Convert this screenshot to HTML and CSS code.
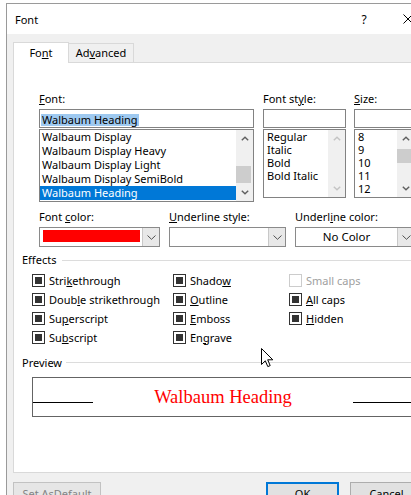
FILE: index.html
```html
<!DOCTYPE html>
<html>
<head>
<meta charset="utf-8">
<link rel="stylesheet" href="styles.css">
</head>
<body>
<div class="window">
  <div class="titlebar">
    <span class="title">Font</span>
    <span class="help">?</span>
    <span></span>
    <svg class="close" width="10" height="10" viewBox="0 0 10 10"><path d="M0.5 0.5L9.5 9.5M9.5 0.5L0.5 9.5" stroke="#000" stroke-width="1"/></svg>
  </div>
  <div class="body">
    <div class="tabs">
      <div class="tab active">Fo<u>n</u>t</div>
      <div class="tab adv">Ad<u>v</u>anced</div>
    </div>
    <div class="panel">
      <div class="pickers">
        <div class="col col-font">
          <div class="lbl"><u>F</u>ont:</div>
          <div class="input"><span class="sel">Walbaum Heading</span></div>
          <div class="list list-font">
            <div class="items">
              <div class="item">Walbaum Display</div>
              <div class="item">Walbaum Display Heavy</div>
              <div class="item">Walbaum Display Light</div>
              <div class="item">Walbaum Display SemiBold</div>
              <div class="item on">Walbaum Heading</div>
            </div>
            <div class="sb">
              <div class="sbtn"><svg width="8" height="5" viewBox="0 0 8 5"><polyline points="0.8,4.3 4,1.2 7.2,4.3" fill="none" stroke="#606060" stroke-width="1.4"/></svg></div>
              <div class="track"><div class="thumb thumb-font"></div></div>
              <div class="sbtn"><svg width="8" height="5" viewBox="0 0 8 5"><polyline points="0.8,0.7 4,3.8 7.2,0.7" fill="none" stroke="#606060" stroke-width="1.4"/></svg></div>
            </div>
          </div>
        </div>
        <div class="col col-style">
          <div class="lbl">Font st<u>y</u>le:</div>
          <div class="input"></div>
          <div class="list list-small">
            <div class="items">
              <div class="item">Regular</div>
              <div class="item">Italic</div>
              <div class="item">Bold</div>
              <div class="item">Bold Italic</div>
            </div>
            <div class="sb">
              <div class="sbtn"><svg width="8" height="5" viewBox="0 0 8 5"><polyline points="0.8,4.3 4,1.2 7.2,4.3" fill="none" stroke="#c4c4c4" stroke-width="1.4"/></svg></div>
              <div class="track"></div>
              <div class="sbtn"><svg width="8" height="5" viewBox="0 0 8 5"><polyline points="0.8,0.7 4,3.8 7.2,0.7" fill="none" stroke="#c4c4c4" stroke-width="1.4"/></svg></div>
            </div>
          </div>
        </div>
        <div class="col col-size">
          <div class="lbl"><u>S</u>ize:</div>
          <div class="input"></div>
          <div class="list list-small">
            <div class="items">
              <div class="item">8</div>
              <div class="item">9</div>
              <div class="item">10</div>
              <div class="item">11</div>
              <div class="item">12</div>
            </div>
            <div class="sb">
              <div class="sbtn"><svg width="8" height="5" viewBox="0 0 8 5"><polyline points="0.8,4.3 4,1.2 7.2,4.3" fill="none" stroke="#606060" stroke-width="1.4"/></svg></div>
              <div class="track"><div class="thumb thumb-size"></div></div>
              <div class="sbtn"><svg width="8" height="5" viewBox="0 0 8 5"><polyline points="0.8,0.7 4,3.8 7.2,0.7" fill="none" stroke="#606060" stroke-width="1.4"/></svg></div>
            </div>
          </div>
        </div>
      </div>

      <div class="combos">
        <div class="ccol c1">
          <div class="lbl">Font <u>c</u>olor:</div>
          <div class="combo">
            <div class="val"><span class="swatch"></span></div>
            <div class="dd"><svg width="9" height="5" viewBox="0 0 9 5"><polyline points="0.5,0.5 4.5,4.3 8.5,0.5" fill="none" stroke="#505050" stroke-width="1"/></svg></div>
          </div>
        </div>
        <div class="ccol c2">
          <div class="lbl"><u>U</u>nderline style:</div>
          <div class="combo">
            <div class="val"></div>
            <div class="dd"><svg width="9" height="5" viewBox="0 0 9 5"><polyline points="0.5,0.5 4.5,4.3 8.5,0.5" fill="none" stroke="#505050" stroke-width="1"/></svg></div>
          </div>
        </div>
        <div class="ccol c3">
          <div class="lbl">Underl<u>i</u>ne color:</div>
          <div class="combo">
            <div class="val center">No Color</div>
            <div class="dd"><svg width="9" height="5" viewBox="0 0 9 5"><polyline points="0.5,0.5 4.5,4.3 8.5,0.5" fill="none" stroke="#505050" stroke-width="1"/></svg></div>
          </div>
        </div>
      </div>

      <div class="group-head effects-head"><span class="gl">Effects</span><span class="rule"></span></div>
      <div class="effects">
        <div class="cb"><span class="box"></span><span class="ct">Stri<u>k</u>ethrough</span></div>
        <div class="cb"><span class="box"></span><span class="ct">Shado<u>w</u></span></div>
        <div class="cb disabled"><span class="box"></span><span class="ct">Small caps</span></div>
        <div class="cb"><span class="box"></span><span class="ct">Doub<u>l</u>e strikethrough</span></div>
        <div class="cb"><span class="box"></span><span class="ct"><u>O</u>utline</span></div>
        <div class="cb"><span class="box"></span><span class="ct"><u>A</u>ll caps</span></div>
        <div class="cb"><span class="box"></span><span class="ct">Su<u>p</u>erscript</span></div>
        <div class="cb"><span class="box"></span><span class="ct"><u>E</u>mboss</span></div>
        <div class="cb"><span class="box"></span><span class="ct"><u>H</u>idden</span></div>
        <div class="cb"><span class="box"></span><span class="ct">Su<u>b</u>script</span></div>
        <div class="cb"><span class="box"></span><span class="ct">En<u>g</u>rave</span></div>
      </div>

      <div class="group-head preview-head"><span class="gl">Preview</span><span class="rule"></span></div>
      <div class="preview">
        <span class="pline"></span>
        <span class="ptext">Walbaum Heading</span>
        <span class="pline"></span>
      </div>
    </div>
    <div class="buttons">
      <div class="btn def">Set As <u>D</u>efault</div>
      <div class="btn ok">OK</div>
      <div class="btn cancel">Cancel</div>
    </div>
  </div>
</div>
<svg class="cursor" width="13" height="20" viewBox="0 0 13 20"><path d="M0.5 0.5L0.5 16.5L4.3 12.8L6.8 18.6L9.2 17.6L6.7 11.8L11.8 11.8Z" fill="#fff" stroke="#000" stroke-width="1" stroke-linejoin="miter"/></svg>
</body>
</html>
```
FILE: styles.css
```css
html, body {
  margin: 0;
  padding: 0;
}
body {
  width: 411px;
  height: 495px;
  overflow: hidden;
  position: relative;
  background: #ffffff;
  font-family: "Noto Sans", "Open Sans", sans-serif;
  font-size: 11px;
  color: #000;
}
u {
  text-underline-offset: 1px;
}
.window {
  margin: 3px 0 0 6px;
  width: 440px;
  height: 520px;
  border-left: 1px solid #9a9a9a;
  border-top: 1px solid #9a9a9a;
  background: #f0f0f0;
}
.titlebar {
  height: 30px;
  background: #fff;
  display: grid;
  grid-template-columns: 351px 12px 33px 10px;
  align-items: center;
}
.title {
  padding-left: 8px;
}
.help {
  text-align: center;
  font-size: 12px;
}
.close {
  display: block;
}
.body {
  padding: 8px 0 0 6px;
}
.tabs {
  display: flex;
  align-items: flex-end;
  height: 21px;
  margin-bottom: -1px;
}
.tab {
  box-sizing: border-box;
  height: 20px;
  border: 1px solid #d9d9d9;
  background: #f0f0f0;
  display: flex;
  align-items: center;
  justify-content: center;
  padding-bottom: 1px;
}
.tab.active {
  width: 56px;
  height: 21px;
  background: #fff;
  border-bottom: none;
  position: relative;
  z-index: 1;
  padding-bottom: 2px;
}
.tab.adv {
  width: 66px;
  margin-left: -1px;
}
.panel {
  box-sizing: border-box;
  width: 430px;
  height: 411px;
  border: 1px solid #d9d9d9;
  background: #fff;
}
.pickers {
  display: flex;
  padding: 28px 0 0 25px;
}
.col-font { width: 215px; }
.col-style { width: 83px; margin-left: 9px; }
.col-size { width: 61px; margin-left: 8px; }
.lbl {
  height: 18px;
  line-height: 16px;
  white-space: nowrap;
}
.input {
  box-sizing: border-box;
  height: 19px;
  border: 1px solid #828282;
  background: #fff;
  margin-bottom: 1px;
  padding: 2px 0 0 1px;
}
.sel {
  display: inline-block;
  background: #9ec9f0;
  height: 12px;
  line-height: 12px;
  padding: 0 1px;
}
.list {
  box-sizing: border-box;
  border: 1px solid #828282;
  background: #fff;
  display: flex;
}
.list-font { height: 73px; }
.list-small { height: 69px; }
.items {
  flex: 1;
  overflow: hidden;
}
.item {
  height: 13px;
  line-height: 13px;
  padding-left: 3px;
  white-space: nowrap;
}
.list-font .item {
  height: 14px;
  line-height: 14px;
  padding-left: 2px;
}
.item.on {
  background: #0078d7;
  color: #fff;
}
.sb {
  width: 17px;
  background: #f0f0f0;
  display: flex;
  flex-direction: column;
}
.sbtn {
  height: 17px;
  display: flex;
  align-items: center;
  justify-content: center;
}
.sbtn svg { display: block; }
.track {
  flex: 1;
}
.thumb {
  background: #cdcdcd;
  width: 15px;
}
.thumb-font {
  margin-top: 19px;
  height: 17px;
}
.thumb-size {
  margin-top: 2px;
  height: 14px;
  width: 17px;
}
.combos {
  display: flex;
  padding: 7px 0 0 25px;
}
.c1 { width: 121px; }
.c2 { width: 117px; margin-left: 9px; }
.c3 { width: 120px; margin-left: 9px; }
.combo {
  box-sizing: border-box;
  height: 20px;
  border: 1px solid #8a8a8a;
  background: #fff;
  display: flex;
}
.val {
  flex: 1;
  display: flex;
  align-items: flex-start;
}
.val.center {
  justify-content: center;
  align-items: center;
  font-size: 11.5px;
  padding-bottom: 1px;
}
.swatch {
  display: block;
  width: 97px;
  height: 12px;
  margin: 2px 0 0 3px;
  background: #ff0000;
}
.dd {
  width: 16px;
  border-left: 1px solid #c8c8c8;
  background: #e8e8e8;
  display: flex;
  align-items: center;
  justify-content: center;
}
.dd svg { display: block; }
.group-head {
  display: flex;
  align-items: center;
  height: 16px;
  padding-left: 8px;
}
.gl {
  padding-bottom: 2px;
}
.effects-head { margin-top: 5px; }
.preview-head { margin-top: 8px; }
.rule {
  flex: 1;
  height: 1px;
  background: #dcdcdc;
  margin-left: 6px;
}
.preview-head .rule { margin-left: 4px; margin-top: -2px; }
.effects {
  display: grid;
  grid-template-columns: 141px 116px auto;
  grid-auto-rows: 19px;
  padding: 3px 0 0 18px;
}
.cb {
  display: flex;
  align-items: center;
  white-space: nowrap;
}
.ct {
  padding-bottom: 1px;
}
.box {
  box-sizing: border-box;
  width: 13px;
  height: 13px;
  border: 1px solid #333;
  margin-right: 4px;
  display: flex;
  align-items: center;
  justify-content: center;
  background: #fff;
}
.box::after {
  content: "";
  width: 7px;
  height: 7px;
  background: #333;
}
.cb.disabled { color: #a0a0a0; }
.cb.disabled .box { border-color: #cccccc; }
.cb.disabled .box::after { display: none; }
.preview {
  box-sizing: border-box;
  width: 382px;
  height: 40px;
  margin: 6px 0 0 18px;
  border: 1px solid #646464;
  background: #fff;
  display: flex;
  align-items: baseline;
  justify-content: space-between;
  padding-top: 1px;
}
.pline {
  display: inline-block;
  width: 60px;
  height: 0;
  border-bottom: 1px solid #000;
}
.ptext {
  font-family: "Liberation Serif", "Times New Roman", serif;
  font-size: 18.5px;
  line-height: 36px;
  color: #ff0000;
}
.buttons {
  display: flex;
  margin-top: 9px;
}
.btn {
  box-sizing: border-box;
  height: 23px;
  border: 1px solid #adadad;
  background: #e1e1e1;
  display: flex;
  align-items: center;
  justify-content: center;
  white-space: nowrap;
}
.btn.def {
  width: 88px;
  color: #838383;
  border-color: #c2c2c2;
  background: #e6e6e6;
}
.btn.ok {
  width: 73px;
  margin-left: 165px;
  border: 2px solid #0078d7;
}
.btn.cancel {
  width: 73px;
  margin-left: 11px;
}
.cursor {
  position: absolute;
  left: 261px;
  top: 348px;
}
```
